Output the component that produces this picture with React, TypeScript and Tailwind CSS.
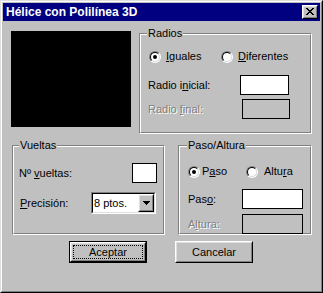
import React from "react";

const raisedOuter = "border border-t-white border-l-white border-r-black border-b-black";
const raisedInner = "border border-t-[#dfdfdf] border-l-[#dfdfdf] border-r-[#808080] border-b-[#808080]";
const sunkenOuter = "border border-t-[#808080] border-l-[#808080] border-r-white border-b-white";
const sunkenInner = "border border-t-black border-l-black border-r-[#dfdfdf] border-b-[#dfdfdf]";

function Radio({ checked }: { checked?: boolean }) {
  return (
    <div className="w-[12px] h-[12px] shrink-0 rounded-full border border-t-[#808080] border-l-[#808080] border-r-white border-b-white">
      <div className="w-full h-full rounded-full border border-t-black border-l-black border-r-[#dfdfdf] border-b-[#dfdfdf] bg-white flex items-center justify-center">
        {checked && <div className="w-[4px] h-[4px] rounded-full bg-black" />}
      </div>
    </div>
  );
}

function U({ children }: { children: React.ReactNode }) {
  return <span className="underline underline-offset-[1px] decoration-1">{children}</span>;
}

function Group({
  label,
  w,
  h,
  labelLeft,
  children,
}: {
  label: string;
  w: string;
  h: string;
  labelLeft: string;
  children: React.ReactNode;
}) {
  return (
    <div className={`relative shrink-0 ${sunkenOuter} ${w} ${h}`}>
      <div className="h-full border border-t-white border-l-white border-r-[#808080] border-b-[#808080] flex flex-col">
        {children}
      </div>
      <span className={`absolute top-[-7px] ${labelLeft} bg-[#c0c0c0] px-[1px] leading-[13px]`}>{label}</span>
    </div>
  );
}

function Edit({ w, disabled }: { w: string; disabled?: boolean }) {
  return (
    <div className={`${w} h-[20px] shrink-0 border border-black ${disabled ? "bg-[#c0c0c0]" : "bg-white"}`} />
  );
}

const dis = "text-[#808080] [text-shadow:1px_1px_0_#fff]";

export default function App() {
  return (
    <div className="w-[323px] h-[293px] bg-[#c0c0c0] border border-t-[#dfdfdf] border-l-[#dfdfdf] border-r-black border-b-black font-['Liberation_Sans',Arial,sans-serif] text-[11px] leading-[13px] text-black select-none">
      <div className="h-full border border-t-white border-l-white border-r-[#808080] border-b-[#808080] p-[1px] flex flex-col">
        {/* Title bar */}
        <div className="h-[18px] shrink-0 bg-[#000080] flex items-center justify-between">
          <span className="pl-[3px] text-white font-bold text-[12px] leading-[14px]">Hélice con Polilínea 3D</span>
          <div className={`mr-[2px] w-[16px] h-[14px] bg-[#c0c0c0] ${raisedOuter}`}>
            <div className={`w-full h-full ${raisedInner} flex items-center justify-center pr-[1px] pb-[1px]`}>
              <svg width="8" height="7" viewBox="0 0 8 7" shapeRendering="crispEdges">
                <path
                  fill="#000"
                  d="M0 0h2v1H0zM6 0h2v1H6zM1 1h2v1H1zM5 1h2v1H5zM2 2h4v1H2zM3 3h2v1H3zM2 4h4v1H2zM1 5h2v1H1zM5 5h2v1H5zM0 6h2v1H0zM6 6h2v1H6z"
                />
              </svg>
            </div>
          </div>
        </div>

        {/* Body */}
        <div className="flex flex-col">
          {/* Row 1 */}
          <div className="flex items-start pl-[8px] mt-[10px]">
            <div className="w-[120px] h-[96px] bg-black shrink-0" />
            <div className="ml-[8px] mt-[2px]">
              <Group label="Radios" w="w-[173px]" h="h-[101px]" labelLeft="left-[7px]">
                <div className="flex items-center mt-[15px] pl-[8px]">
                  <div className="flex items-center gap-[5px] w-[72px]">
                    <Radio checked />
                    <span><U>I</U>guales</span>
                  </div>
                  <div className="flex items-center gap-[5px]">
                    <Radio />
                    <span><U>D</U>iferentes</span>
                  </div>
                </div>
                <div className="flex items-center mt-[12px] pl-[7px]">
                  <span className="w-[92px]">Radio i<U>n</U>icial:</span>
                  <Edit w="w-[49px]" />
                </div>
                <div className="flex items-center mt-[4px] pl-[7px]">
                  <span className={`w-[94px] ${dis}`}>Radio <U>f</U>inal:</span>
                  <Edit w="w-[48px]" disabled />
                </div>
              </Group>
            </div>
          </div>

          {/* Row 2 */}
          <div className="flex items-start pl-[9px] mt-[11px]">
            <Group label="Vueltas" w="w-[153px]" h="h-[90px]" labelLeft="left-[6px]">
              <div className="flex items-center mt-[16px] pl-[5px]">
                <span className="w-[113px]">Nº <U>v</U>ueltas:</span>
                <Edit w="w-[25px]" />
              </div>
              <div className="flex items-center mt-[9px] pl-[6px]">
                <span className="w-[71px]"><U>P</U>recisión:</span>
                <div className={`w-[65px] h-[22px] ${sunkenOuter}`}>
                  <div className={`w-full h-full ${sunkenInner} bg-white flex items-center justify-between`}>
                    <span className="pl-[1px]">8 ptos.</span>
                    <div className={`w-[16px] h-full bg-[#c0c0c0] ${raisedOuter}`}>
                      <div className={`w-full h-full ${raisedInner} flex items-center justify-center`}>
                        <svg width="7" height="4" viewBox="0 0 7 4" shapeRendering="crispEdges">
                          <path fill="#000" d="M0 0h7v1H0zM1 1h5v1H1zM2 2h3v1H2zM3 3h1v1H3z" />
                        </svg>
                      </div>
                    </div>
                  </div>
                </div>
              </div>
            </Group>
            <div className="ml-[13px]">
              <Group label="Paso/Altura" w="w-[134px]" h="h-[90px]" labelLeft="left-[8px]">
                <div className="flex items-center mt-[18px] pl-[8px]">
                  <div className="flex items-center gap-[2px] w-[58px]">
                    <Radio checked />
                    <span>P<U>a</U>so</span>
                  </div>
                  <div className="flex items-center gap-[6px]">
                    <Radio />
                    <span>Altu<U>r</U>a</span>
                  </div>
                </div>
                <div className="flex items-center mt-[11px] pl-[8px]">
                  <span className="w-[54px]">Pas<U>o</U>:</span>
                  <Edit w="w-[61px]" />
                </div>
                <div className="flex items-center mt-[5px] pl-[8px]">
                  <span className={`w-[54px] ${dis}`}>A<U>l</U>tura:</span>
                  <Edit w="w-[61px]" disabled />
                </div>
              </Group>
            </div>
          </div>

          {/* Buttons */}
          <div className="flex items-start mt-[6px] pl-[66px] gap-[28px]">
            <div className="w-[78px] h-[22px] border border-black">
              <div className={`w-full h-full ${raisedOuter}`}>
                <div className={`w-full h-full ${raisedInner} p-[1px] flex`}>
                  <div className="flex-1 border border-dotted border-black flex items-center justify-center">
                    Aceptar
                  </div>
                </div>
              </div>
            </div>
            <div className={`w-[78px] h-[22px] ${raisedOuter}`}>
              <div className={`w-full h-full ${raisedInner} flex items-center justify-center`}>Cancelar</div>
            </div>
          </div>
        </div>
      </div>
    </div>
  );
}
